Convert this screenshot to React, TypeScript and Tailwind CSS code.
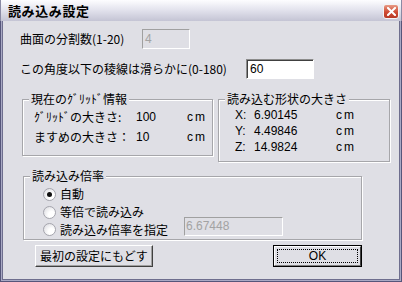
import React from 'react'

const font = { fontFamily: '"Noto Sans CJK JP", "Noto Sans", sans-serif' }
const latin = { fontFamily: '"Liberation Sans", Arial, sans-serif' }

function Radio({ checked }: { checked?: boolean }) {
    return (
        <div className="w-[13px] h-[13px] rounded-full border border-[#a5a5ad] bg-[radial-gradient(circle_at_70%_70%,#ffffff_30%,#d6d6dc_100%)] flex items-center justify-center shrink-0">
            {checked && <div className="w-[5px] h-[5px] rounded-full bg-[#101010]" />}
        </div>
    )
}

function Group({ label, className, children }: { label: string, className: string, children: React.ReactNode }) {
    return (
        <div className={"relative border border-[#a6a6aa] shadow-[inset_1px_1px_0_#ffffff,1px_1px_0_#ffffff] " + className}>
            <span className="absolute left-[6px] top-[-8px] px-[2px] bg-[#dfdfe5] leading-[14px]">{label}</span>
            {children}
        </div>
    )
}

export default function App() {
    return (
        <div style={font} className="w-[402px] h-[282px] flex flex-col text-[12px] text-black bg-[#dfdfe5] overflow-hidden">
            {/* title bar */}
            <div className="h-[21px] shrink-0 flex justify-between items-start bg-[linear-gradient(#fdfdff,#e4e4ee_45%,#c4c4d4)] border-x border-[#8a8aa4]">
                <div className="pl-[7px] pt-[2px] text-[13px] font-bold leading-[17px] tracking-[0.6px]">読み込み設定</div>
                <div className="mr-[2px] mt-[4px] w-[16px] h-[15px] rounded-[3px] border border-[#f4f4f4] bg-[linear-gradient(#e89a86,#cf4a32_55%,#b83a26)] flex items-center justify-center">
                    <svg width="9" height="9" viewBox="0 0 9 9">
                        <path d="M1 1 L8 8 M8 1 L1 8" stroke="#ffffff" strokeWidth="2" strokeLinecap="square" />
                    </svg>
                </div>
            </div>

            {/* frame + body */}
            <div className="flex-1 border-x border-b border-[#56567a]">
                <div className="h-full border-x border-b border-[#a9a9c4]">
                    <div className="h-full border-x border-b border-[#6e6e8e] flex flex-col">
                        <div className="mt-[8px] ml-[17px] h-[20px] flex items-center">
                            <span className="w-[122px]">曲面の分割数(1-20)</span>
                            <div style={latin} className="w-[48px] h-[20px] border border-t-[#a0a0a0] border-l-[#a0a0a0] border-r-[#ffffff] border-b-[#ffffff] bg-[#dfdfe5] pl-[2px] leading-[18px] text-[#a3a3a3]">4</div>
                        </div>
                        <div className="mt-[10px] ml-[17px] h-[20px] flex items-center">
                            <span className="w-[226px]">この角度以下の稜線は滑らかに(0-180)</span>
                            <div style={latin} className="w-[68px] h-[20px] border border-t-[#8c8c8c] border-l-[#8c8c8c] border-r-[#ffffff] border-b-[#ffffff] shadow-[inset_1px_1px_0_#404040] bg-white pl-[3px] leading-[18px]">60</div>
                        </div>

                        <div className="mt-[20px] flex items-start">
                            <Group label="現在のｸﾞﾘｯﾄﾞ情報" className="ml-[19px] w-[191px] h-[57px]">
                                <div className="pt-[9px] pl-[11px] flex flex-col gap-[4px]">
                                    <div className="flex h-[16px] leading-[16px]">
                                        <span className="w-[102px]">ｸﾞﾘｯﾄﾞの大きさ:</span>
                                        <span style={latin} className="w-[51px]">100</span>
                                        <span style={latin} className="tracking-[2px]">cm</span>
                                    </div>
                                    <div className="flex h-[16px] leading-[16px]">
                                        <span className="w-[102px]">ますめの大きさ：</span>
                                        <span style={latin} className="w-[51px]">10</span>
                                        <span style={latin} className="tracking-[2px]">cm</span>
                                    </div>
                                </div>
                            </Group>
                            <Group label="読み込む形状の大きさ" className="ml-[5px] w-[172px] h-[63px]">
                                <div style={latin} className="pt-[7px] pl-[16px] flex flex-col">
                                    {[['X:', '6.90145'], ['Y:', '4.49846'], ['Z:', '14.9824']].map(([k, v]) => (
                                        <div key={k} className="flex items-center h-[16px] leading-[14px]">
                                            <span className="w-[19px]">{k}</span>
                                            <span className="w-[82px]">{v}</span>
                                            <span className="tracking-[2px]">cm</span>
                                        </div>
                                    ))}
                                </div>
                            </Group>
                        </div>

                        <Group label="読み込み倍率" className="mt-[14px] ml-[20px] w-[339px] h-[64px]">
                            <div className="pt-[8px] pl-[19px] flex flex-col leading-[14px]">
                                <div className="flex items-center gap-[4px] h-[18px]">
                                    <Radio checked />
                                    <span>自動</span>
                                </div>
                                <div className="flex items-center gap-[4px] h-[18px]">
                                    <Radio />
                                    <span>等倍で読み込み</span>
                                </div>
                                <div className="flex items-center gap-[4px] h-[17px]">
                                    <Radio />
                                    <span className="w-[120px]">読み込み倍率を指定</span>
                                    <div style={latin} className="self-start mt-[-4px] w-[99px] h-[19px] border border-t-[#a0a0a0] border-l-[#a0a0a0] border-r-[#ffffff] border-b-[#ffffff] bg-[#dfdfe5] pl-[1px] leading-[17px] text-[#a3a3a3]">6.67448</div>
                                </div>
                            </div>
                        </Group>

                        <div className="mt-[5px] flex">
                            <div className="ml-[32px] w-[118px] h-[22px] border border-t-white border-l-white border-r-[#404040] border-b-[#404040] shadow-[inset_-1px_-1px_0_#a0a0a0] flex items-center justify-center">
                                最初の設定にもどす
                            </div>
                            <div className="ml-[120px] w-[89px] h-[22px] border border-black">
                                <div className="h-full border border-t-white border-l-white border-r-[#404040] border-b-[#808080] p-[2px]">
                                    <div style={latin} className="h-full border border-dotted border-black flex items-center justify-center leading-none">OK</div>
                                </div>
                            </div>
                        </div>
                    </div>
                </div>
            </div>
        </div>
    )
}
